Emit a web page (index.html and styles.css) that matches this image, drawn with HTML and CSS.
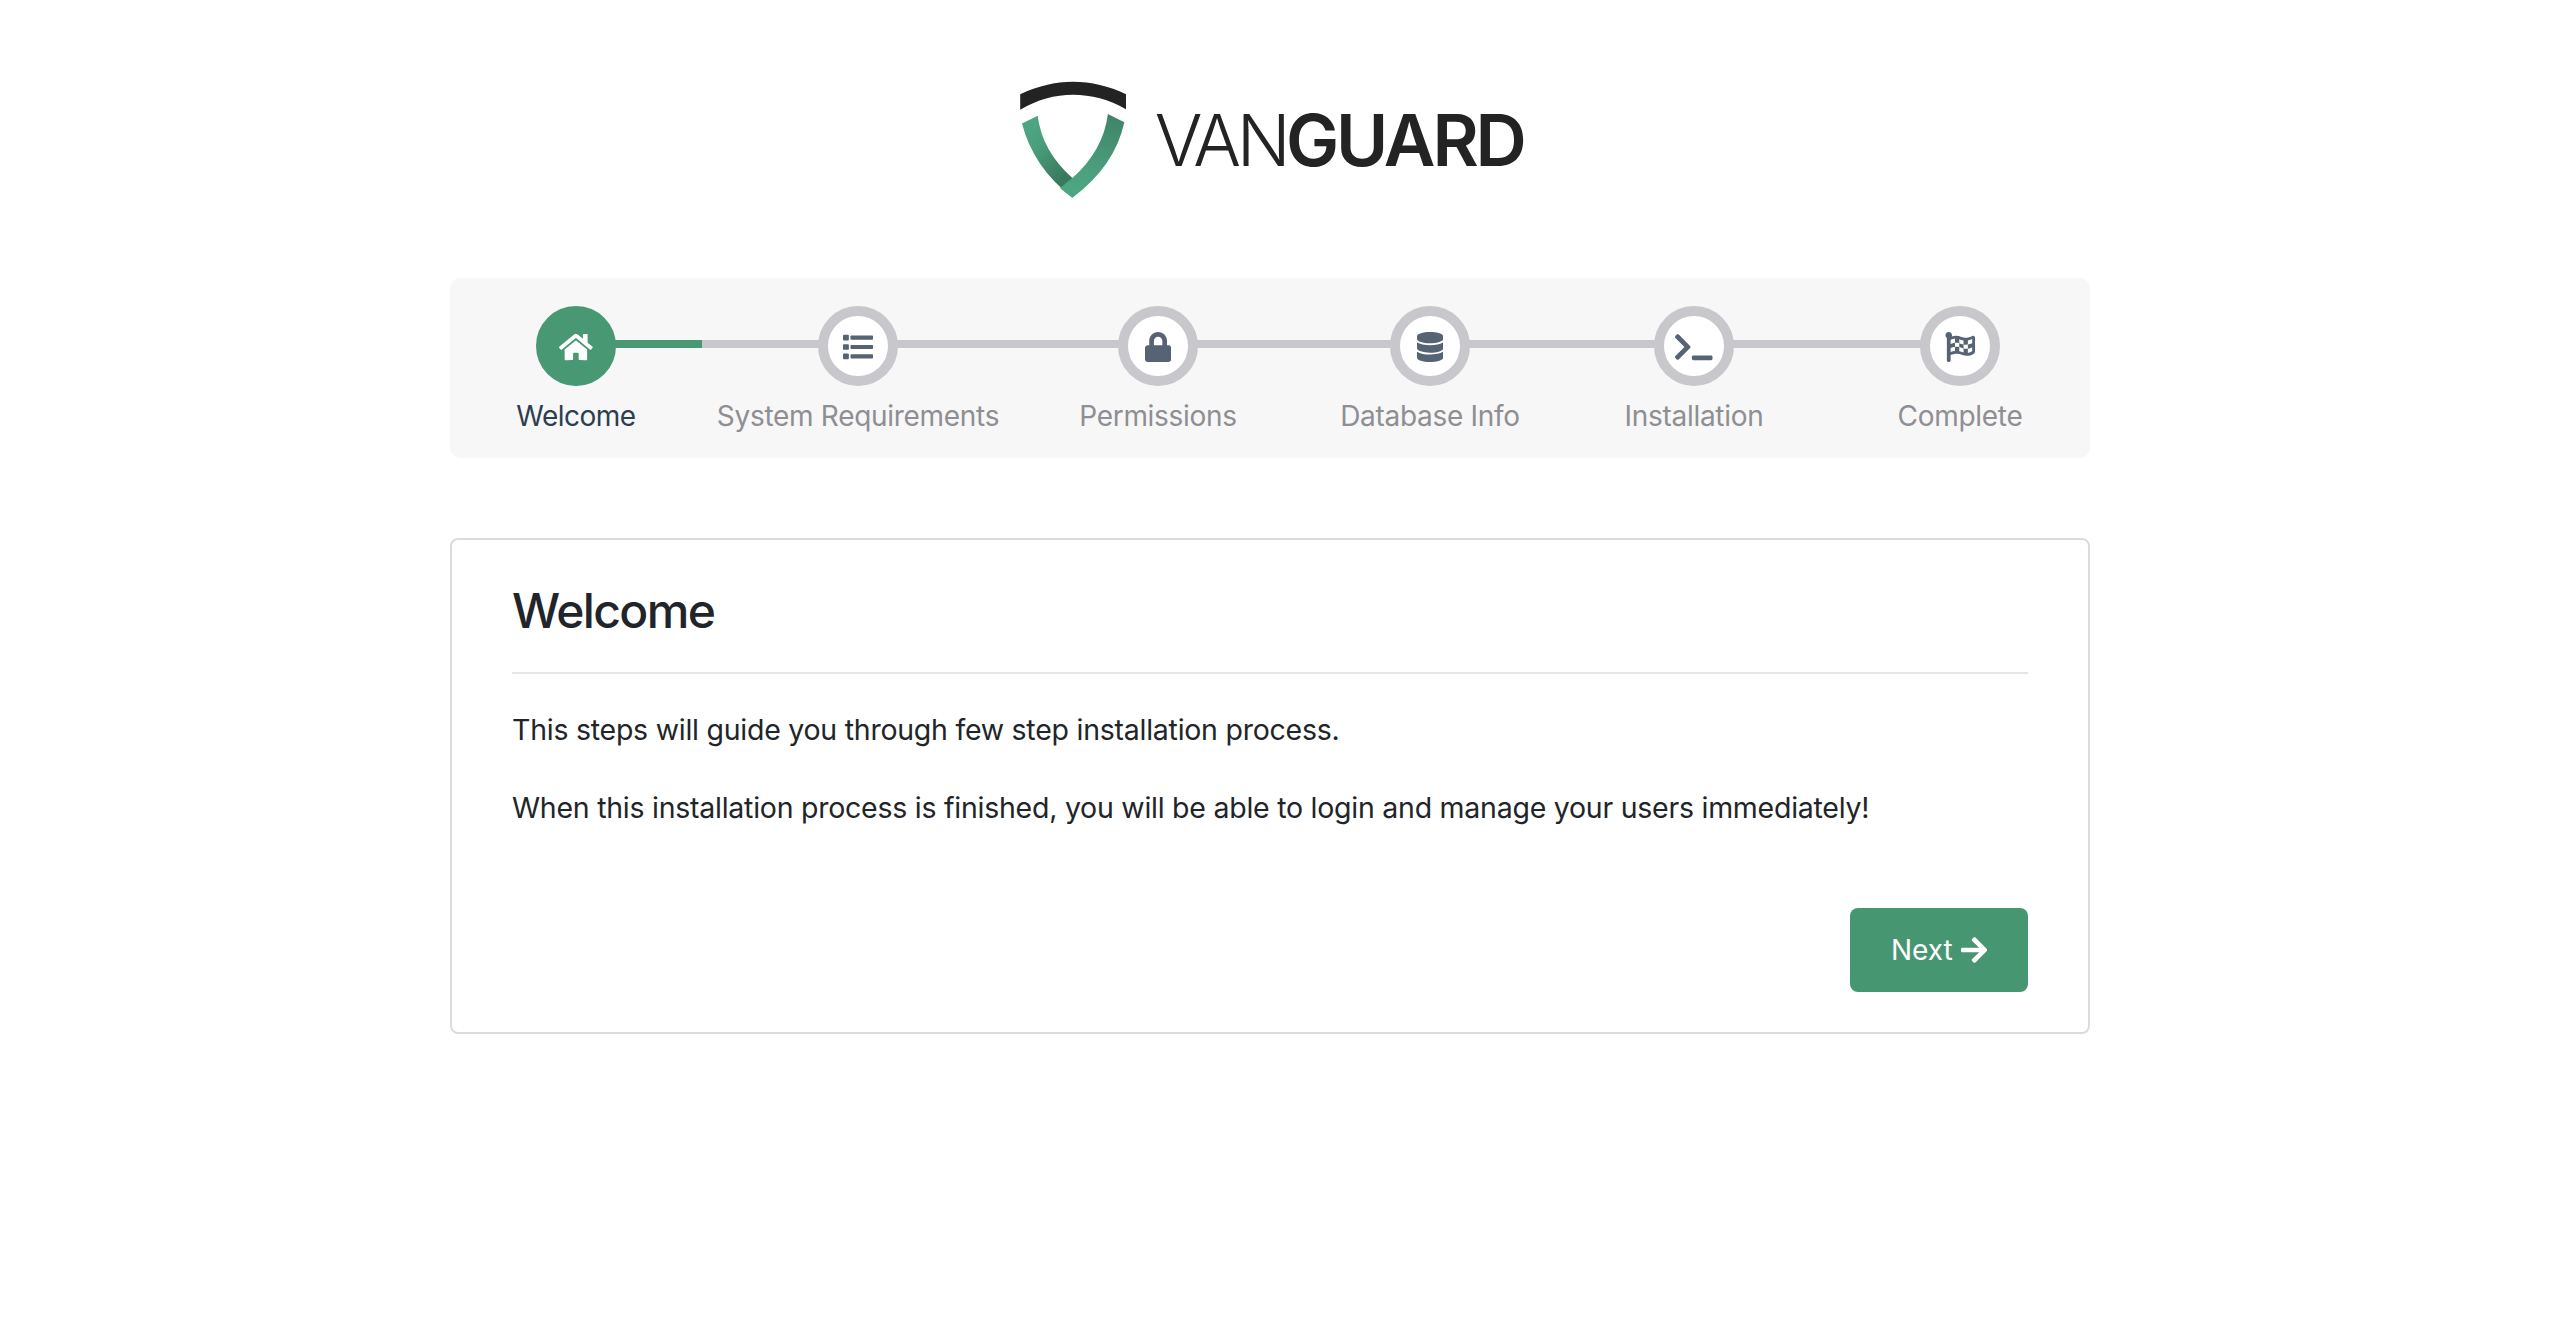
FILE: index.html
```
<!DOCTYPE html>
<html lang="en">
<head>
<meta charset="utf-8">
<title>Vanguard - Installation</title>
<link rel="stylesheet" href="styles.css">
</head>
<body>
<main class="container">
  <header class="logo">
    <svg class="logo-image" viewBox="0 0 510 120" role="img" aria-label="Vanguard">
      <defs>
        <linearGradient id="left" x1="0.2" y1="0" x2="0.8" y2="1">
          <stop offset="0" stop-color="#4da682"/><stop offset="0.3" stop-color="#4ba07c"/><stop offset="0.82" stop-color="#397a5e"/>
        </linearGradient>
        <linearGradient id="right" x1="0.6" y1="0" x2="0.4" y2="1">
          <stop offset="0" stop-color="#40866a"/><stop offset="0.75" stop-color="#4ca27e"/><stop offset="1" stop-color="#4da682"/>
        </linearGradient>
      </defs>
      <path fill="#232323" d="M2.2 14.3C20 6 37 1.8 55 1.8S91 6 108 14.3V29.2C91 19.5 73 14.8 55 14.8S19 19.8 2.2 29.8Z"/>
      <path fill="url(#left)" d="M4 43.6L19.7 35.7Q24 71 54.4 98L54.4 117.7Q15 87 4 43.6Z"/>
      <path fill="url(#right)" d="M89.9 34L106.3 42.3Q97 86 54.5 117.7Q48 113.500 42 108L54.400 98Q85.300 70.600 89.900 34Z"/>
      <text class="logo-light" x="136.8" y="85.700">VAN</text>
      <text class="logo-bold" x="268" y="85.700">GUARD</text>
    </svg>
  </header>

  <nav class="steps">
    <div class="step active">
      <div class="rail"><i class="line none"></i><span class="circle"><svg class="icon" viewBox="0 0 576 512"><path d="M280.37 148.26L96 300.11V464a16 16 0 0 0 16 16l112.06-.29a16 16 0 0 0 15.92-16V368a16 16 0 0 1 16-16h64a16 16 0 0 1 16 16v95.64a16 16 0 0 0 16 16.05L464 480a16 16 0 0 0 16-16V300L295.67 148.26a12.19 12.19 0 0 0-15.3 0zM571.6 251.47L488 182.56V44.05a12 12 0 0 0-12-12h-56a12 12 0 0 0-12 12v72.61L318.47 43a48 48 0 0 0-61 0L4.34 251.47a12 12 0 0 0-1.6 16.9l25.5 31A12 12 0 0 0 45.15 301l235.22-193.74a12.19 12.19 0 0 1 15.3 0L530.9 301a12 12 0 0 0 16.9-1.6l25.5-31a12 12 0 0 0-1.7-16.93z"/></svg></span><i class="line"></i></div>
      <p class="label">Welcome</p>
    </div>
    <div class="step">
      <div class="rail"><i class="line"></i><span class="circle"><svg class="icon" viewBox="0 0 512 512"><rect x="0" y="48" width="100" height="96" rx="16"/><rect x="0" y="208" width="100" height="96" rx="16"/><rect x="0" y="368" width="100" height="96" rx="16"/><rect x="128" y="60" width="384" height="72" rx="14"/><rect x="128" y="220" width="384" height="72" rx="14"/><rect x="128" y="380" width="384" height="72" rx="14"/></svg></span><i class="line"></i></div>
      <p class="label">System Requirements</p>
    </div>
    <div class="step">
      <div class="rail"><i class="line"></i><span class="circle"><svg class="icon" viewBox="0 0 448 512"><path d="M400 224h-24v-72C376 68.200 307.800 0 224 0S72 68.200 72 152v72H48c-26.500 0-48 21.500-48 48v192c0 26.500 21.500 48 48 48h352c26.500 0 48-21.500 48-48V272c0-26.500-21.500-48-48-48zm-104 0H152v-72c0-39.700 32.300-72 72-72s72 32.300 72 72v72z"/></svg></span><i class="line"></i></div>
      <p class="label">Permissions</p>
    </div>
    <div class="step">
      <div class="rail"><i class="line"></i><span class="circle"><svg class="icon" viewBox="0 0 448 512"><path d="M448 73.143v45.714C448 159.143 347.667 192 224 192S0 159.143 0 118.857V73.143C0 32.857 100.333 0 224 0s224 32.857 224 73.143zM448 176v102.857C448 319.143 347.667 352 224 352S0 319.143 0 278.857V176c48.125 33.143 136.208 48.572 224 48.572S399.874 209.143 448 176zm0 160v102.857C448 479.143 347.667 512 224 512S0 479.143 0 438.857V336c48.125 33.143 136.208 48.572 224 48.572S399.874 369.143 448 336z"/></svg></span><i class="line"></i></div>
      <p class="label">Database Info</p>
    </div>
    <div class="step">
      <div class="rail"><i class="line"></i><span class="circle"><svg class="icon" viewBox="0 0 640 512"><path d="M257.981 272.971L63.638 467.314c-9.373 9.373-24.569 9.373-33.941 0L7.029 444.647c-9.357-9.357-9.375-24.522-.04-33.901L161.011 256 6.990 101.255c-9.335-9.379-9.317-24.544.04-33.901l22.667-22.667c9.373-9.373 24.569-9.373 33.941 0L257.981 239.030c9.373 9.372 9.373 24.568 0 33.941zM640 456v-32c0-13.255-10.745-24-24-24H312c-13.255 0-24 10.745-24 24v32c0 13.255 10.745 24 24 24h304c13.255 0 24-10.745 24-24z"/></svg></span><i class="line"></i></div>
      <p class="label">Installation</p>
    </div>
    <div class="step">
      <div class="rail"><i class="line"></i><span class="circle"><svg class="icon" viewBox="0 0 512 512"><path d="M243.2 189.9V258c26.1 5.9 49.3 15.6 73.6 22.3v-68.2c-26-5.8-49.4-15.5-73.6-22.2zm223.3-123c-34.3 15.9-76.5 31.9-117 31.9C296 98.8 251.7 64 184.3 64c-25 0-47.3 4.4-68 12 2.8-7.3 4.1-15.2 3.6-23.6C118.1 24 94.8 1.2 66.3 0 34.3-1.3 8 24.3 8 56c0 19 9.5 35.8 24 45.9V488c0 13.3 10.7 24 24 24h16c13.3 0 24-10.7 24-24v-94.4c28.3-12.1 63.6-22.1 114.4-22.1 53.6 0 97.8 34.8 165.2 34.8 48.2 0 86.7-16.3 122.5-40.9 8.700-6 13.800-15.800 13.800-26.400V95.900c.1-23.300-24.200-38.800-45.400-29zM169.600 325.500c-25.800 2.700-50 8.200-73.600 16.600v-70.500c26.200-9.300 47.500-15 73.600-17.400v71.300zM464 191c-23.600 9.800-46.300 19.500-73.600 23.900V286c24.800-3.400 51.400-11.800 73.600-26v70.500c-25.100 16.100-48.500 24.700-73.600 27.100V286c-27 3.700-47.900 1.500-73.600-5.600v67.400c-23.900-7.400-47.300-16.700-73.600-21.300V258c-19.700-4.400-40.800-6.800-73.600-3.800v-70c-22.400 3.100-44.600 10.200-73.600 20.900v-70.500c33.200-12.200 50.100-19.800 73.600-22v71.600c27-3.700 48.400-1.300 73.600 5.700v-67.400c23.700 7.400 47.200 16.700 73.600 21.300v68.400c23.700 5.300 47.600 6.900 73.600 2.700V143c27-4.800 52.300-13.600 73.600-22.500z"/></svg></span><i class="line none"></i></div>
      <p class="label">Complete</p>
    </div>
  </nav>

  <section class="card">
    <h1 class="title">Welcome</h1>
    <hr class="rule">
    <p class="text">This steps will guide you through few step installation process.</p>
    <p class="text">When this installation process is finished, you will be able to login and manage your users immediately!</p>
    <a class="button">Next<svg class="arrow" viewBox="0 0 448 512"><path d="M190.500 66.900l22.200-22.200c9.400-9.400 24.600-9.400 33.900 0L441 239c9.400 9.400 9.400 24.600 0 33.900L246.600 467.300c-9.400 9.400-24.600 9.400-33.900 0l-22.200-22.200c-9.500-9.500-9.300-25 .4-34.300L311.400 296H24c-13.300 0-24-10.700-24-24v-32c0-13.300 10.700-24 24-24h287.400L190.900 101.200c-9.800-9.300-10-24.800-.4-34.300z"/></svg></a>
  </section>
</main>
</body>
</html>
```
FILE: styles.css
```
* { box-sizing: border-box; }

body {
  margin: 0;
  background: #fff;
  color: #212529;
  font-family: Inter, "Liberation Sans", sans-serif;
  font-size: 28.5px;
}

.container {
  width: 1640px;
  margin-left: 450px;
  padding-top: 80px;
}

.logo {
  display: flex;
  padding-left: 568px;
  margin-bottom: 78px;
}
.logo-image { width: 510px; height: 120px; overflow: visible; }
.logo-light, .logo-bold { fill: #232323; font-size: 71px; }
.logo-light { font-weight: 300; letter-spacing: -4.4px; }
.logo-bold { font-weight: 600; letter-spacing: -3.1px; }

.steps {
  display: grid;
  grid-template-columns: 252px 312px 288px 256px 272px 260px;
  height: 180px;
  padding-top: 28px;
  background: #f7f7f7;
  border-radius: 10px;
}
.rail { display: flex; align-items: center; }
.line {
  flex: 1;
  height: 8px;
  margin: -4px -1px 0;
  background: #c8c7cc;
}
.line:first-child { margin-left: 0; }
.line:last-child { margin-right: 0; }
.active .line { background: #499874; }
.rail .none { background: none; }
.circle {
  position: relative;
  display: flex;
  align-items: center;
  justify-content: center;
  width: 80px;
  height: 80px;
  border: 10px solid #c8c7cc;
  border-radius: 50%;
  background: #fff;
}
.active .circle { border-color: #499874; background: #499874; }
.icon { height: 30px; fill: #566374; margin-top: 1px; }
.active .icon { fill: #fff; }
.label {
  margin: 10px 0 0;
  text-align: center;
  font-size: 28px;
  line-height: 40px;
  letter-spacing: -0.3px;
  color: #8e8e93;
}
.active .label { color: #2c3e50; letter-spacing: -0.5px; }

.card {
  display: flex;
  flex-direction: column;
  height: 496px;
  margin-top: 80px;
  padding: 38px 60px 0;
  border: 2px solid #dcdcdc;
  border-radius: 8px;
}
.title {
  margin: 0;
  font-size: 48px;
  font-weight: 500;
  line-height: 66px;
  letter-spacing: -1.6px;
}
.rule {
  width: 100%;
  height: 2px;
  margin: 28px 0 32px;
  border: 0;
  background: #e5e5e5;
}
.text {
  margin: 0 0 30px;
  line-height: 48px;
  letter-spacing: -0.25px;
}
.button {
  display: flex;
  align-items: center;
  justify-content: center;
  gap: 8px;
  align-self: flex-end;
  width: 178px;
  height: 84px;
  margin-top: 46px;
  border-radius: 8px;
  background: #479672;
  color: #fff;
  font-size: 28px;
}
.arrow { height: 30px; fill: currentColor; }
```
